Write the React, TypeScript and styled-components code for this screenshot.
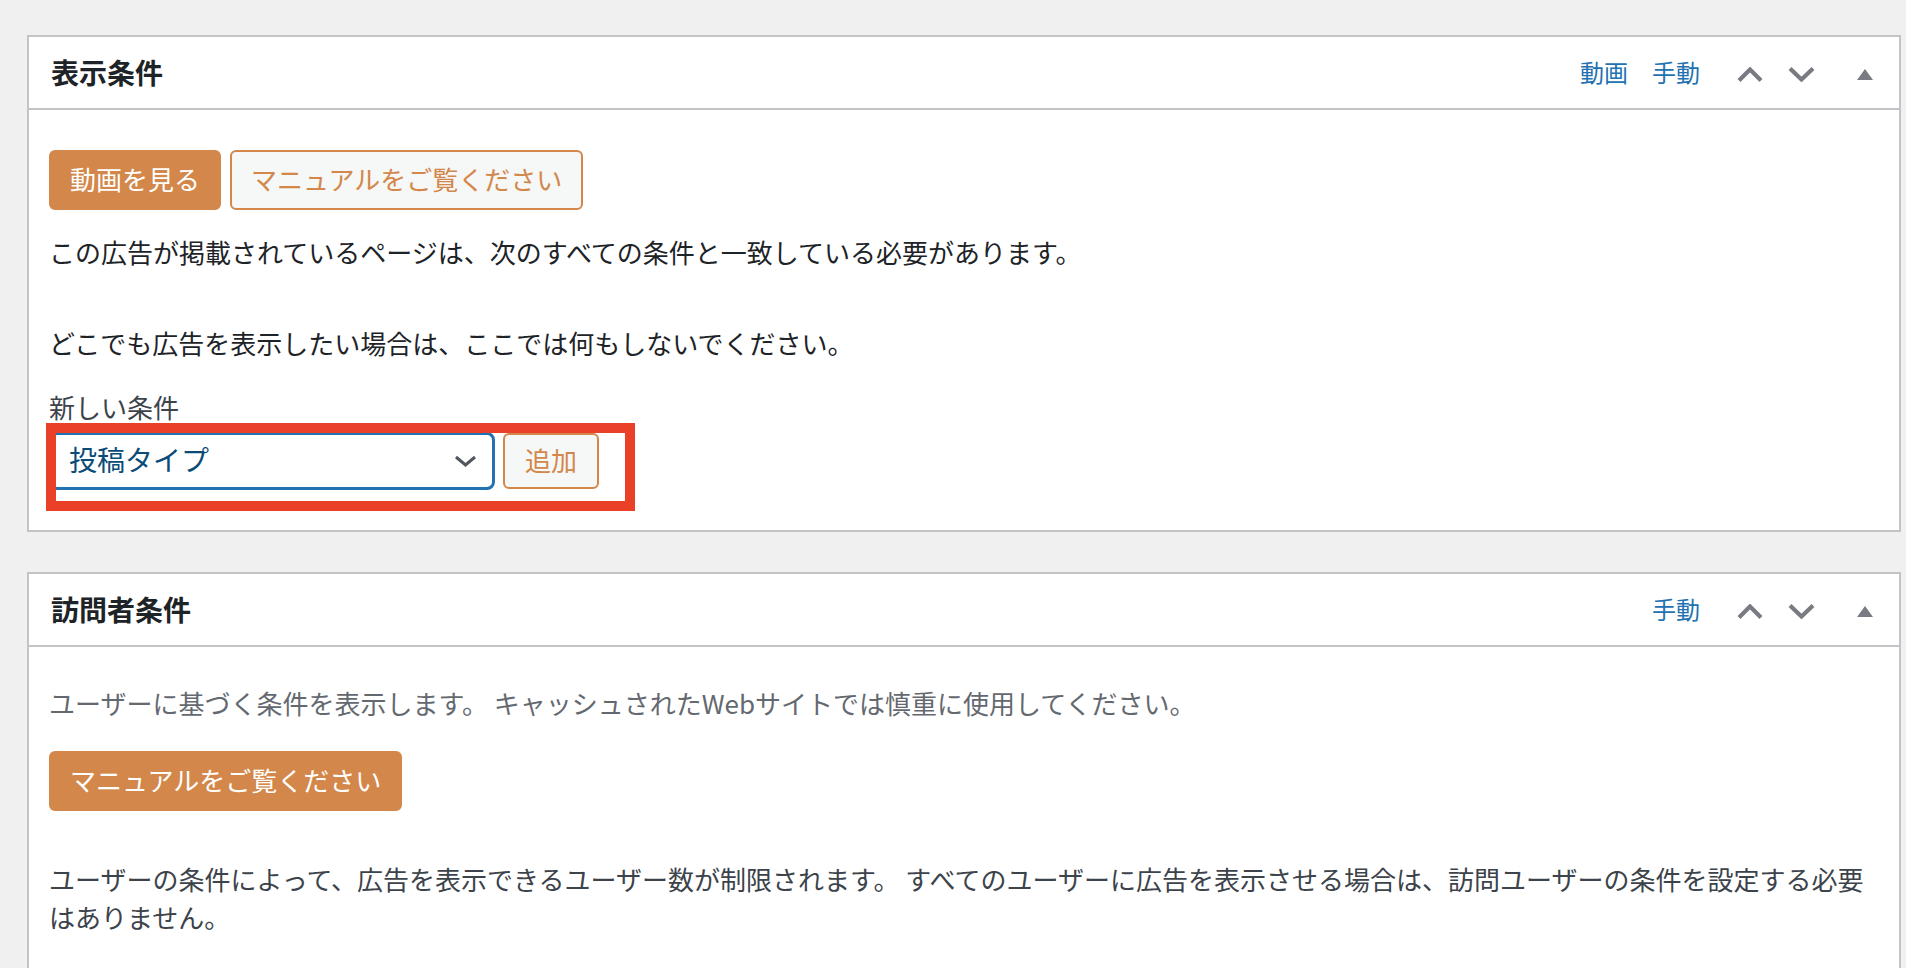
import styled, { createGlobalStyle } from 'styled-components';

const GlobalStyle = createGlobalStyle`
  html, body {
    margin: 0;
    padding: 0;
    background: #f0f0f1;
  }
  body {
    font-family: "Noto Sans CJK JP", "Noto Sans", sans-serif;
    color: #1d2327;
  }
`;

const Page = styled.div`
  display: flex;
  flex-direction: column;
  gap: 40px;
  padding: 35px 5px 0 27px;
  min-height: 968px;
  box-sizing: border-box;
`;

const Postbox = styled.section`
  background: #fff;
  border: 2px solid #c3c4c7;
`;

const PostboxHeader = styled.div`
  display: flex;
  align-items: center;
  height: 71px;
  padding-left: 22px;
  border-bottom: 2px solid #c3c4c7;
`;

const Title = styled.h2`
  flex: 1;
  margin: 0;
  padding-bottom: 2px;
  font-size: 28px;
  font-weight: 700;
  line-height: 1;
  color: #1d2327;
`;

const HeaderLinks = styled.div`
  display: flex;
  gap: 24px;
  padding-bottom: 2px;
`;

const HeaderLink = styled.a`
  font-size: 24px;
  line-height: 1;
  color: #2271b1;
  text-decoration: none;
  cursor: pointer;
`;

const HandleButton = styled.button<{ $space: number }>`
  display: flex;
  align-items: center;
  justify-content: center;
  margin-left: ${(p) => p.$space}px;
  padding: 0;
  padding-top: 3px;
  border: 0;
  background: none;
  cursor: pointer;
`;

const HandleEnd = styled.span`
  width: 26px;
`;

const Inside = styled.div<{ $top: number; $bottom: number }>`
  padding: ${(p) => p.$top}px 12px ${(p) => p.$bottom}px 20px;
`;

const ButtonRow = styled.div`
  display: flex;
  gap: 9px;
`;

const Button = styled.button<{ $filled?: boolean; $top?: number }>`
  display: inline-flex;
  align-items: center;
  height: 60px;
  margin-top: ${(p) => p.$top || 0}px;
  padding: 0 19px 2px;
  border: 2px solid #d3874a;
  border-radius: 6px;
  background: ${(p) => (p.$filled ? '#d3874a' : '#f6f7f7')};
  color: ${(p) => (p.$filled ? '#fff' : '#d3874a')};
  font-family: inherit;
  font-size: 26px;
  line-height: 1;
  cursor: pointer;
`;

const Text = styled.p<{ $top: number; $tone?: 'dark' | 'muted' | 'mid' }>`
  margin: ${(p) => p.$top}px 0 0;
  font-size: 26px;
  line-height: 38px;
  color: ${(p) =>
    p.$tone === 'muted' ? '#646970' : p.$tone === 'mid' ? '#3c434a' : '#1d2327'};
`;

const Label = styled.div`
  margin-top: 28px;
  font-size: 26px;
  line-height: 34px;
  color: #3c434a;
`;

const ConditionRow = styled.div`
  position: relative;
  display: flex;
  align-items: center;
  gap: 8px;
  margin-top: 8px;
`;

const SelectBox = styled.div`
  display: flex;
  align-items: center;
  justify-content: space-between;
  width: 446px;
  height: 58px;
  box-sizing: border-box;
  padding: 0 15px 4px 17px;
  border: 3px solid #2271b1;
  border-radius: 8px;
  background: #fff;
  font-size: 28px;
  color: #0a4b78;

  svg {
    margin-top: 4px;
  }
`;

const AddButton = styled.button`
  height: 56px;
  padding: 0 20px 2px;
  border: 2px solid #d3874a;
  border-radius: 6px;
  background: #f6f7f7;
  color: #d3874a;
  font-family: inherit;
  font-size: 26px;
  line-height: 1;
  cursor: pointer;
`;

// red annotation frame drawn over the select + button
const Highlight = styled.div`
  position: absolute;
  top: -9px;
  left: -3px;
  width: 589px;
  height: 88px;
  box-sizing: border-box;
  border: 10px solid #e94027;
  pointer-events: none;
`;

const ChevronUp = () => (
  <svg width="26" height="15" viewBox="0 0 26 15">
    <path d="M2 13.5 L13 2.5 L24 13.5" fill="none" stroke="#787c82" strokeWidth="4.2" />
  </svg>
);

const ChevronDown = () => (
  <svg width="27" height="15" viewBox="0 0 27 15">
    <path d="M2 1.5 L13.5 12.5 L25 1.5" fill="none" stroke="#787c82" strokeWidth="4.2" />
  </svg>
);

const Triangle = () => (
  <svg width="16" height="11" viewBox="0 0 16 11">
    <polygon points="8,0 16,11 0,11" fill="#787c82" />
  </svg>
);

const SelectChevron = () => (
  <svg width="23" height="12" viewBox="0 0 23 12">
    <path d="M2 2 L11.5 10 L21 2" fill="none" stroke="#50575e" strokeWidth="3" />
  </svg>
);

const Header = ({ title, links }: { title: string; links: string[] }) => (
  <PostboxHeader>
    <Title>{title}</Title>
    <HeaderLinks>
      {links.map((l) => (
        <HeaderLink key={l}>{l}</HeaderLink>
      ))}
    </HeaderLinks>
    <HandleButton $space={37} aria-label="上へ移動">
      <ChevronUp />
    </HandleButton>
    <HandleButton $space={25} aria-label="下へ移動">
      <ChevronDown />
    </HandleButton>
    <HandleButton $space={42} aria-label="パネルを切り替え">
      <Triangle />
    </HandleButton>
    <HandleEnd />
  </PostboxHeader>
);

export default function App() {
  return (
    <>
      <GlobalStyle />
      <Page>
        <Postbox>
          <Header title="表示条件" links={['動画', '手動']} />
          <Inside $top={40} $bottom={40}>
            <ButtonRow>
              <Button $filled>動画を見る</Button>
              <Button>マニュアルをご覧ください</Button>
            </ButtonRow>
            <Text $top={23}>
              この広告が掲載されているページは、次のすべての条件と一致している必要があります。
            </Text>
            <Text $top={53}>どこでも広告を表示したい場合は、ここでは何もしないでください。</Text>
            <Label>新しい条件</Label>
            <ConditionRow>
              <SelectBox>
                <span>投稿タイプ</span>
                <SelectChevron />
              </SelectBox>
              <AddButton>追加</AddButton>
              <Highlight />
            </ConditionRow>
          </Inside>
        </Postbox>

        <Postbox>
          <Header title="訪問者条件" links={['手動']} />
          <Inside $top={37} $bottom={60}>
            <Text $top={0} $tone="muted">
              ユーザーに基づく条件を表示します。 キャッシュされたWebサイトでは慎重に使用してください。
            </Text>
            <Button $filled $top={29}>
              マニュアルをご覧ください
            </Button>
            <Text $top={49} $tone="mid">
              ユーザーの条件によって、広告を表示できるユーザー数が制限されます。 すべてのユーザーに広告を表示させる場合は、訪問ユーザーの条件を設定する必要はありません。
            </Text>
          </Inside>
        </Postbox>
      </Page>
    </>
  );
}
